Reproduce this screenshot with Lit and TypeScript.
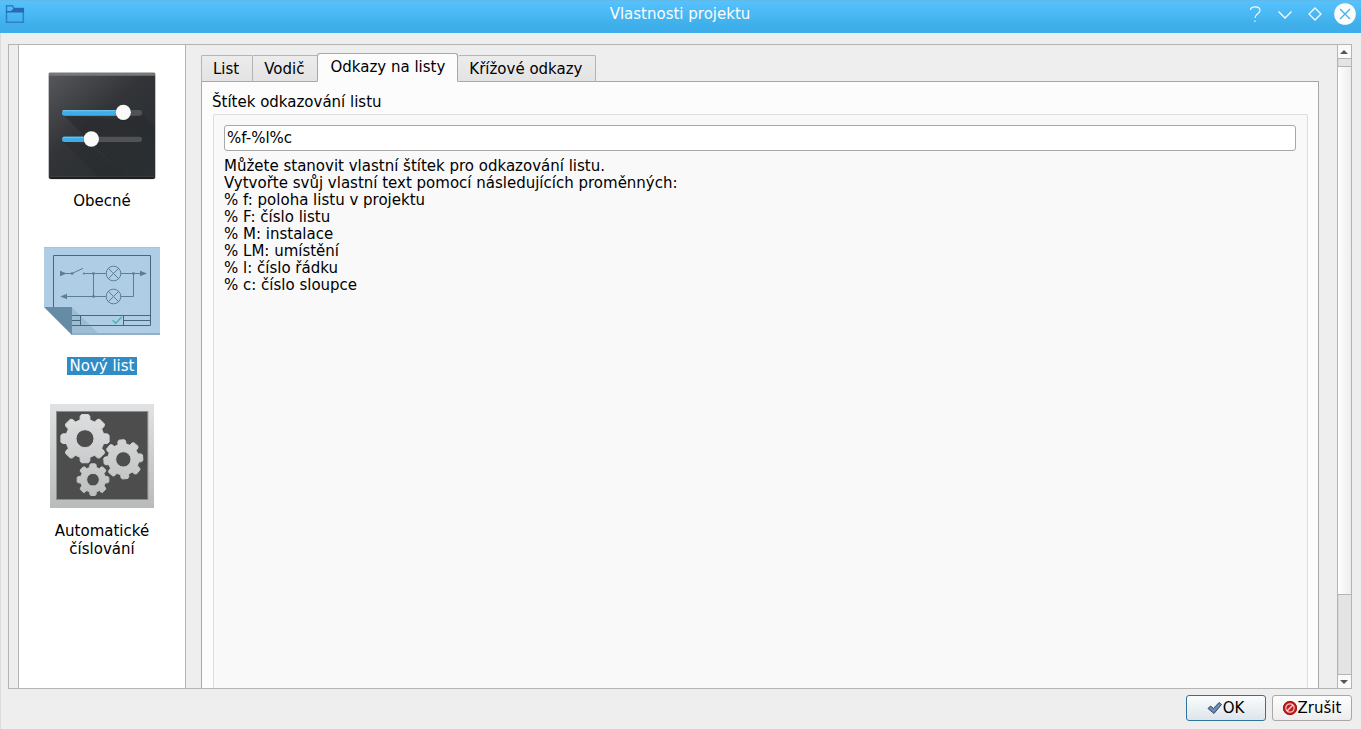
import { LitElement, html, css, svg } from "lit";
import { customElement, state } from "lit/decorators.js";

/** Outline of an eight-toothed gear with a round hole. */
function gearPath(cx: number, cy: number, r: number, hole: number, turn: number): string {
  const root = r * 0.79;
  const profile: [number, number][] = [
    [-15, root], [-12, r * 0.94], [-8, r], [8, r], [12, r * 0.94], [15, root],
  ];
  const points: string[] = [];
  for (let i = 0; i < 8; i++) {
    for (const [deg, radius] of profile) {
      const a = ((i * 45 + deg + turn - 90) * Math.PI) / 180;
      points.push(`${(cx + radius * Math.cos(a)).toFixed(1)} ${(cy + radius * Math.sin(a)).toFixed(1)}`);
    }
  }
  return `M${points.join("L")}Z M${cx - hole} ${cy}a${hole} ${hole} 0 1 0 ${hole * 2} 0a${hole} ${hole} 0 1 0 ${-hole * 2} 0Z`;
}

const generalIcon = html`<svg width="108" height="108" viewBox="36 36 324 324" aria-hidden="true">
  <defs>
    <linearGradient id="slab" x1="0" y1="0" x2="0.8" y2="0.9">
      <stop offset="0" stop-color="#56575b" /><stop offset="0.5" stop-color="#323437" /><stop offset="1" stop-color="#2b3033" />
    </linearGradient>
    <linearGradient id="shade" x1="0" y1="0" x2="1" y2="1">
      <stop offset="0" stop-color="#1d1e20" stop-opacity="0.75" /><stop offset="1" stop-color="#1d1e20" stop-opacity="0.1" />
    </linearGradient>
  </defs>
  <rect x="37" y="37" width="322" height="321" rx="7" fill="#a5a6a7" />
  <rect x="39" y="39" width="318" height="318" rx="6" fill="#1e2022" />
  <rect x="39" y="39" width="318" height="311" rx="6" fill="#77787a" />
  <path d="M39 47h318v298q0 5-5 5H44q-5 0-5-5z" fill="url(#slab)" />
  <path d="M80 163L262 180L318 163L357 200V350H270Z" fill="url(#shade)" opacity="0.55" />
  <path d="M80 243L166 258L270 350H187Z" fill="#1d1e20" opacity="0.2" />
  <rect x="78" y="150" width="240" height="17" rx="8" fill="#505256" />
  <rect x="78" y="150" width="184" height="17" rx="8" fill="#3daee9" />
  <rect x="80" y="150" width="178" height="4" rx="2" fill="#6cc1ee" />
  <rect x="78" y="230" width="240" height="16" rx="8" fill="#505256" />
  <rect x="78" y="230" width="88" height="16" rx="8" fill="#3daee9" />
  <rect x="80" y="230" width="82" height="4" rx="2" fill="#6cc1ee" />
  <circle cx="262" cy="159" r="24" fill="#222426" opacity="0.5" />
  <circle cx="262" cy="157" r="23" fill="#fafafa" />
  <circle cx="166" cy="239" r="24" fill="#222426" opacity="0.5" />
  <circle cx="166" cy="237" r="23" fill="#fafafa" />
</svg>`;

const lamp = (cx: number, cy: number) => svg`
  <circle cx=${cx} cy=${cy} r="22" />
  <path d=${`M${cx - 16} ${cy - 16}l32 32M${cx + 16} ${cy - 16}l-32 32`} />`;

const sheetIcon = html`<svg width="116" height="88" viewBox="24 33 348 264" aria-hidden="true">
  <path d="M24 33H372V297H108L24 213Z" fill="#afcee6" />
  <path d="M24 33H372V36H24Z" fill="#a4c4dc" />
  <path d="M104 291H372V297H108Z" fill="#93b0c8" />
  <path d="M108 213L186 291H108Z" fill="#9dbdd5" />
  <g fill="none" stroke="#46687f" stroke-width="3">
    <path d="M52.500 213V58.500H343.500V268.500H108M108 238.500H343M133.500 238V268M262.500 238V268M108 253.500H133M262 253.500H343" />
  </g>
  <g fill="none" stroke="#5a7f97" stroke-width="3">
    <path d="M74 112.500H108L141 97M141 112.500H211M254 112.500H315M172.500 112V181M92 181.500H211M254 181.500H292.500V112" />
    ${lamp(232.5, 112.5)} ${lamp(232.5, 181.5)}
  </g>
  <g fill="#5a7f97">
    <path d="M72 104L92 112.500L72 121ZM312 104L333 112.500L312 121ZM93 173V190L73 181.500Z" />
    <rect x="105" y="109" width="7" height="7" /><rect x="141" y="110" width="5" height="5" />
    <rect x="169" y="109" width="7" height="7" /><rect x="169" y="178" width="7" height="7" /><rect x="289" y="109" width="7" height="7" />
  </g>
  <path d="M230 253l9 9l18-19" fill="none" stroke="#43b5a3" stroke-width="4" />
  <path d="M24 213H108V297Z" fill="#668ba4" />
</svg>`;

const gearsIcon = html`<svg width="104" height="104" viewBox="30 27 312 312" aria-hidden="true">
  <defs>
    <linearGradient id="metal" gradientUnits="userSpaceOnUse" x1="0" y1="27" x2="0" y2="339">
      <stop offset="0" stop-color="#e0e2e3" /><stop offset="1" stop-color="#b9bbbb" />
    </linearGradient>
  </defs>
  <rect x="30" y="27" width="312" height="312" fill="url(#metal)" />
  <rect x="49.500" y="49.500" width="274" height="264" fill="#4d4d4d" stroke="#8b8c8c" stroke-width="3" />
  <g fill="url(#metal)" stroke="url(#metal)" stroke-width="3" stroke-linejoin="round" fill-rule="evenodd">
    <path d=${gearPath(135, 131, 73, 27, 0)} />
    <path d=${gearPath(250, 193, 59, 23, -5)} />
    <path d=${gearPath(159, 254, 48, 19, 0)} />
  </g>
</svg>`;

const sections = [
  { label: "Obecné", icon: generalIcon },
  { label: "Nový list", icon: sheetIcon },
  { label: "Automatické číslování", icon: gearsIcon },
];

const tabs = ["List", "Vodič", "Odkazy na listy", "Křížové odkazy"];

const hints = [
  "Můžete stanovit vlastní štítek pro odkazování listu.",
  "Vytvořte svůj vlastní text pomocí následujících proměnných:",
  "% f: poloha listu v projektu",
  "% F: číslo listu",
  "% M: instalace",
  "% LM: umístění",
  "% l: číslo řádku",
  "% c: číslo sloupce",
];

@customElement("app-root")
export class AppRoot extends LitElement {
  @state() private section = 1;
  @state() private tab = 2;

  static styles = css`
    :host {
      display: flex;
      flex-direction: column;
      box-sizing: border-box;
      height: 100vh;
      background: #eeeeee;
      color: #000;
      font: 15px/17px "DejaVu Sans", sans-serif;
    }
    * { box-sizing: border-box; }
    button { font: inherit; color: inherit; margin: 0; padding: 0; border: 0; background: none; }
    svg { display: block; flex: none; }
    .titlebar {
      display: grid;
      grid-template-columns: 1fr auto 1fr;
      height: 33px;
      flex: none;
      padding: 0 5px 0 4px;
      border-top: 1px solid #5fb9e9;
      background: linear-gradient(#56c2fd, #3daee9 80%);
      color: #fcfcfc;
    }
    .app-icon { margin-top: 3px; }
    .title { margin: 0; padding-top: 5px; font: inherit; }
    .controls { display: flex; justify-content: flex-end; gap: 8px; padding-top: 2px; }
    .controls button { width: 22px; height: 22px; }
    .dialog {
      flex: 1;
      min-height: 0;
      display: flex;
      flex-direction: column;
      padding: 11px 9px 8px 7px;
      border-left: 1px solid #dcdcdc;
    }
    .frame {
      flex: 1;
      min-height: 0;
      display: flex;
      border: 1px solid #b4b4b4;
      overflow: hidden;
    }
    .sidebar {
      flex: none;
      width: 168px;
      margin-left: 9px;
      padding-top: 17px;
      display: flex;
      flex-direction: column;
      align-items: center;
      gap: 17px;
      background: #fff;
      border: solid #b4b4b4;
      border-width: 0 1px;
    }
    .section { display: flex; flex-direction: column; align-items: center; gap: 2px; width: 128px; line-height: 18px; }
    .picture { height: 128px; display: flex; align-items: center; justify-content: center; }
    .caption { padding: 0 3px; }
    .section[aria-current="true"] .caption { background: #308cc6; color: #fff; }
    .content { flex: 1; min-width: 0; display: flex; flex-direction: column; padding: 8px 18px 0 15px; }
    .tabs { display: flex; align-items: flex-end; height: 29px; flex: none; margin-bottom: -1px; z-index: 1; }
    .tab {
      height: 27px;
      padding: 2px 13px 0 11px;
      border: 1px solid #b4b4b4;
      border-right-width: 0;
      border-bottom-color: #a8a8a8;
      background: linear-gradient(#ececec, #e3e3e3);
      border-radius: 2px 0 0 0;
    }
    .tab:last-child { border-right-width: 1px; border-top-right-radius: 2px; }
    .tab[aria-selected="true"] {
      height: 29px;
      padding: 0 12px;
      border-color: #a8a8a8;
      border-right-width: 1px;
      border-bottom-color: #fcfcfc;
      border-radius: 3px 3px 0 0;
      background: #fcfcfc;
    }
    .tab[aria-selected="true"] + .tab { border-left-width: 0; }
    .panel {
      flex: 1;
      display: flex;
      flex-direction: column;
      padding: 12px 10px 0;
      background: #fcfcfc;
      border: 1px solid #a8a8a8;
      border-bottom: 0;
    }
    .group-title { margin-bottom: 3px; }
    .group {
      flex: 1;
      padding: 10px 11px 0 10px;
      margin-left: 1px;
      background: #f9f9f9;
      border: 1px solid #dedede;
      border-bottom: 0;
      border-radius: 2px 2px 0 0;
    }
    .field {
      display: block;
      width: 100%;
      height: 26px;
      margin-bottom: 7px;
      padding: 0 2px;
      font: inherit;
      color: inherit;
      background: #fff;
      border: 1px solid #a8a8a8;
      border-radius: 3px;
      outline: 0;
    }
    .hints { margin: 0; padding: 0; list-style: none; }
    .scroll { flex: none; width: 14px; display: flex; flex-direction: column; border-left: 1px solid #b4b4b4; background: #e4e4e4; }
    .arrow { height: 14px; padding-right: 1px; display: flex; justify-content: center; align-items: center; background: #fafafa; }
    .up { border-bottom: 1px solid #b4b4b4; }
    .down { border-top: 1px solid #b4b4b4; }
    .track { flex: 1; padding-top: 7px; box-shadow: inset 1px 0 #d6d6d6; }
    .thumb { height: 87%; border: solid #b4b4b4; border-width: 1px 0; background: linear-gradient(90deg, #fefefe, #ededed); }
    .actions { flex: none; display: flex; justify-content: flex-end; gap: 6px; padding-top: 6px; }
    .action {
      display: flex;
      align-items: center;
      justify-content: center;
      width: 80px;
      height: 26px;
      padding-right: 1px;
      border: 1px solid #a8a8a8;
      border-radius: 3px;
      background: linear-gradient(#fefefe, #ededed);
    }
    .action.primary { border-color: #2f74a0; background: linear-gradient(#fbfcfd, #dde5eb); }
  `;

  render() {
    return html`
      <header class="titlebar">
        <svg class="app-icon" width="22" height="22" viewBox="0 0 22 22" aria-hidden="true">
          <path d="M2.500 18.200H19.300V4.500H10L8.500 1.800H2.500Z" fill="none" stroke="#2f80cc" stroke-width="1.500" />
          <path d="M2 8.500V7H7L10 4H20V8.500Z" fill="#2769b5" />
        </svg>
        <h1 class="title">Vlastnosti projektu</h1>
        <div class="controls">
          <button aria-label="Nápověda"><svg width="22" height="22" viewBox="0 0 22 22" fill="none" stroke="#fcfcfc" stroke-width="1.100"><path d="M6.500 7C6.500 3 16 2.500 16 7.500C16 11 11 10.500 11 15M11 17.500V19" /></svg></button>
          <button aria-label="Minimalizovat"><svg width="22" height="22" viewBox="0 0 22 22" fill="none" stroke="#fcfcfc" stroke-width="1.300"><path d="M4.500 8.500L11 15L17.500 8.500" /></svg></button>
          <button aria-label="Maximalizovat"><svg width="22" height="22" viewBox="0 0 22 22" fill="none" stroke="#fcfcfc" stroke-width="1.300"><path d="M11 5L17 11L11 17L5 11Z" /></svg></button>
          <button aria-label="Zavřít"><svg width="22" height="22" viewBox="0 0 22 22"><circle cx="11" cy="11" r="10.800" fill="#fcfcfc" /><path d="M6 6L16 16M16 6L6 16" fill="none" stroke="#48b2ea" stroke-width="1.400" /></svg></button>
        </div>
      </header>
      <main class="dialog">
        <div class="frame">
          <nav class="sidebar">
            ${sections.map((s, i) => html`
              <button class="section" aria-current=${i === this.section ? "true" : "false"} @click=${() => (this.section = i)}>
                <span class="picture">${s.icon}</span>
                <span class="caption">${s.label}</span>
              </button>`)}
          </nav>
          <section class="content">
            <div class="tabs" role="tablist">
              ${tabs.map((t, i) => html`
                <button class="tab" role="tab" aria-selected=${i === this.tab ? "true" : "false"} @click=${() => (this.tab = i)}>${t}</button>`)}
            </div>
            <div class="panel" role="tabpanel">
              <label class="group-title" for="reference">Štítek odkazování listu</label>
              <div class="group">
                <input class="field" id="reference" type="text" value="%f-%l%c" />
                <ul class="hints">${hints.map((h) => html`<li>${h}</li>`)}</ul>
              </div>
            </div>
          </section>
          <div class="scroll">
            <button class="arrow up" aria-label="Nahoru"><svg width="8" height="4" viewBox="0 0 8 4"><path d="M0 4L4 0L8 4Z" fill="#555" /></svg></button>
            <div class="track"><div class="thumb"></div></div>
            <button class="arrow down" aria-label="Dolů"><svg width="8" height="4" viewBox="0 0 8 4"><path d="M0 0L4 4L8 0Z" fill="#555" /></svg></button>
          </div>
        </div>
        <footer class="actions">
          <button class="action primary">
            <svg width="16" height="16" viewBox="0 0 16 16" aria-hidden="true"><path d="M1 8.500L3.500 6L6.500 8.500L12 2.500L14.500 4.500L7 13.500Z" fill="#5f83a8" stroke="#38536f" stroke-linejoin="round" /><path d="M3 8L6.500 11L12.500 4.500" fill="none" stroke="#7d9dbd" /></svg>
            OK
          </button>
          <button class="action">
            <svg width="16" height="16" viewBox="0 0 16 16" aria-hidden="true"><circle cx="8" cy="8" r="7" fill="#c41a1a" /><circle cx="8" cy="8" r="6.600" fill="none" stroke="#980e0e" stroke-width="0.800" /><circle cx="8" cy="8" r="4.200" fill="none" stroke="#eec4c4" stroke-width="1.200" /><path d="M5 11L11 5" stroke="#f3d6d6" stroke-width="1.500" /></svg>
            Zrušit
          </button>
        </footer>
      </main>
    `;
  }
}
